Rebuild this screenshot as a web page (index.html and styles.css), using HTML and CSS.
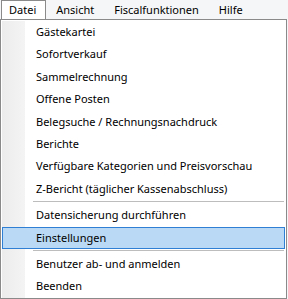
FILE: index.html
```html
<!DOCTYPE html>
<html lang="de">
<head>
  <meta charset="UTF-8">
  <title>Kasse – Menü Datei</title>
  <meta name="viewport" content="width=device-width, initial-scale=1.0">
  <link rel="stylesheet" href="styles.css">
</head>
<body>

  <nav class="menubar">
    <span class="menubar-item open">Datei</span>
    <span class="menubar-item">Ansicht</span>
    <span class="menubar-item">Fiscalfunktionen</span>
    <span class="menubar-item">Hilfe</span>
  </nav>

  <ul class="dropdown">
    <li class="item">Gästekartei</li>
    <li class="item">Sofortverkauf</li>
    <li class="item">Sammelrechnung</li>
    <li class="item">Offene Posten</li>
    <li class="item">Belegsuche / Rechnungsnachdruck</li>
    <li class="item">Berichte</li>
    <li class="item">Verfügbare Kategorien und Preisvorschau</li>
    <li class="item">Z-Bericht (täglicher Kassenabschluss)</li>
    <li class="sep"></li>
    <li class="item">Datensicherung durchführen</li>
    <li class="item active">Einstellungen</li>
    <li class="sep"></li>
    <li class="item">Benutzer ab- und anmelden</li>
    <li class="item">Beenden</li>
  </ul>

</body>
</html>
```

FILE: styles.css
```css
body {
  margin: 0;
  font-family: "Noto Sans", "Open Sans", sans-serif;
  font-size: 11px;
  color: #000;
  background: #f5f6f7;
  width: 288px;
  height: 299px;
  overflow: hidden;
}
.menubar {
  display: flex;
  height: 19px;
  padding-left: 0;
}
.menubar-item {
  padding: 1px 10px 0 10px;
  line-height: 17px;
}
.menubar-item.open {
  background: #fff;
  border: 1px solid #8a8a8a;
  border-bottom: none;
  margin-left: 1px;
  padding: 0 9px 0 7px;
}
.dropdown {
  list-style: none;
  margin: 0;
  width: 287px;
  height: 280px;
  box-sizing: border-box;
  padding: 1px 1px 0 1px;
  border: 1px solid #8a8a8a;
  background: linear-gradient(to right, #ececec 0, #f4f4f4 23px, #fff 23px) content-box, #fff;
}
.item {
  height: 22.4px;
  line-height: 22px;
  padding-left: 34px;
  box-sizing: border-box;
  white-space: nowrap;
}
.item.active {
  background: #b9d9f5;
  border: 1px solid #2f80d5;
  padding-left: 33px;
  line-height: 20px;
}
.sep {
  height: 2px;
  margin: 1px 1px 0 31px;
  border-top: 1px solid #bdbdbd;
}
```
